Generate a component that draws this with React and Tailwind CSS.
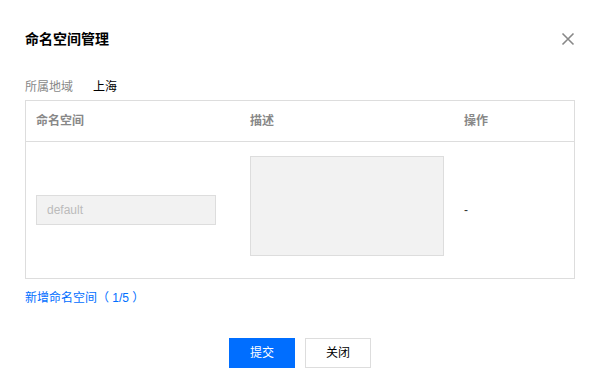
import React from 'react';

const font = { fontFamily: '"Liberation Sans", "Noto Sans CJK SC", sans-serif' };

const CloseIcon = () => (
  <svg width="14" height="14" viewBox="0 0 14 14" className="text-[#888]">
    <path d="M1.5 1.5 L12.5 12.5 M12.5 1.5 L1.5 12.5" stroke="currentColor" strokeWidth="1.6" fill="none" />
  </svg>
);

const App = () => {
  return (
    <div
      className="w-[598px] h-[391px] bg-white pl-[25px] pr-[23px] text-[12px] text-[#333]"
      style={font}
    >
      {/* header */}
      <div className="flex items-center justify-between pt-[29px] h-[49px]">
        <h2 className="text-[14px] leading-[20px] font-bold text-black">命名空间管理</h2>
        <button className="mr-[-1px] flex items-center justify-center w-[16px] h-[16px]">
          <CloseIcon />
        </button>
      </div>

      {/* region */}
      <div className="flex mt-[29px] leading-[18px] h-[18px]">
        <span className="text-[#888] w-[68px]">所属地域</span>
        <span className="text-black">上海</span>
      </div>

      {/* table */}
      <div className="mt-[4px] border border-[#ddd]">
        <div className="flex h-[41px] items-center border-b border-[#ddd] font-bold text-[#888]">
          <div className="w-[214px] pl-[10px]">命名空间</div>
          <div className="w-[214px] pl-[10px]">描述</div>
          <div className="flex-1 pl-[10px]">操作</div>
        </div>
        <div className="flex h-[136px]">
          <div className="w-[214px] pl-[10px] flex items-center">
            <input
              disabled
              value="default"
              readOnly
              className="w-[180px] h-[30px] bg-[#f2f2f2] border border-[#ddd] px-[10px] text-[12px] text-[#bbb]"
              style={font}
            />
          </div>
          <div className="w-[214px] pl-[10px] pt-[14px]">
            <div className="w-[194px] h-[100px] bg-[#f2f2f2] border border-[#ddd]" />
          </div>
          <div className="flex-1 pl-[10px] flex items-center text-[#333]">-</div>
        </div>
      </div>

      {/* add link */}
      <div className="mt-[10px] leading-[18px]">
        <a className="text-[#006eff] cursor-pointer">新增命名空间（ 1/5 ）</a>
      </div>

      {/* footer */}
      <div className="flex justify-center gap-[10px] mt-[31px]">
        <button className="w-[66px] h-[30px] bg-[#006eff] text-white text-[12px]">提交</button>
        <button className="w-[66px] h-[30px] bg-white border border-[#ddd] text-black text-[12px]">关闭</button>
      </div>
    </div>
  );
};

export default App;
